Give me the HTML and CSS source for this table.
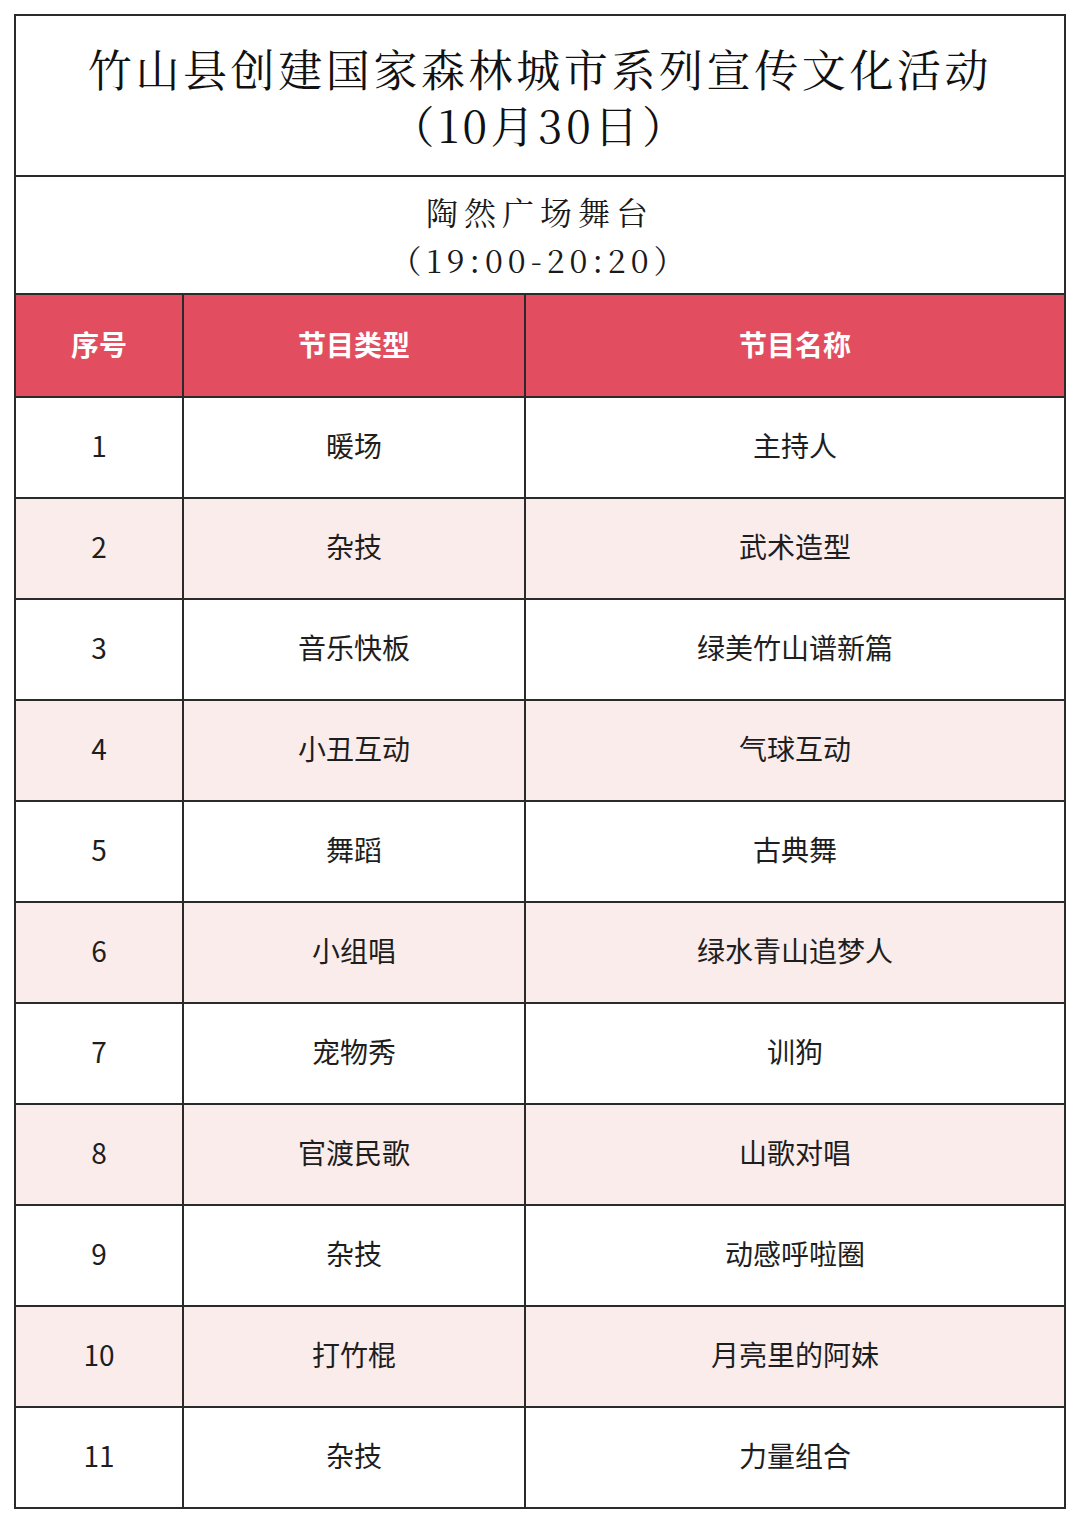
FILE: index.html
```html
<!DOCTYPE html>
<html lang="zh-CN">
<head>
<meta charset="utf-8">
<title>竹山县创建国家森林城市系列宣传文化活动</title>
<link rel="stylesheet" href="styles.css">
</head>
<body>
<table class="schedule">
  <colgroup>
    <col class="c-no">
    <col class="c-type">
    <col class="c-name">
  </colgroup>
  <tr class="r-title">
    <td colspan="3" class="title"><span class="line">竹山县创建国家森林城市系列宣传文化活动</span><span class="line">（10月30日）</span></td>
  </tr>
  <tr class="r-sub">
    <td colspan="3" class="sub"><span class="line">陶然广场舞台</span><span class="line time">（19:00-20:20）</span></td>
  </tr>
  <tr class="r-head">
    <th>序号</th><th>节目类型</th><th>节目名称</th>
  </tr>
  <tr class="row"><td>1</td><td>暖场</td><td>主持人</td></tr>
  <tr class="row alt"><td>2</td><td>杂技</td><td>武术造型</td></tr>
  <tr class="row"><td>3</td><td>音乐快板</td><td>绿美竹山谱新篇</td></tr>
  <tr class="row alt"><td>4</td><td>小丑互动</td><td>气球互动</td></tr>
  <tr class="row"><td>5</td><td>舞蹈</td><td>古典舞</td></tr>
  <tr class="row alt"><td>6</td><td>小组唱</td><td>绿水青山追梦人</td></tr>
  <tr class="row"><td>7</td><td>宠物秀</td><td>训狗</td></tr>
  <tr class="row alt"><td>8</td><td>官渡民歌</td><td>山歌对唱</td></tr>
  <tr class="row"><td>9</td><td>杂技</td><td>动感呼啦圈</td></tr>
  <tr class="row alt"><td>10</td><td>打竹棍</td><td>月亮里的阿妹</td></tr>
  <tr class="row"><td>11</td><td>杂技</td><td>力量组合</td></tr>
</table>
</body>
</html>
```
FILE: styles.css
```css
html, body {
  margin: 0;
  padding: 0;
  background: #ffffff;
}
body {
  padding: 14px 15px 0 14px;
  font-family: "Noto Sans CJK SC", "Noto Sans", sans-serif;
  color: #1e1e1e;
}
.schedule {
  width: 1050px;
  border-collapse: collapse;
  table-layout: fixed;
  border: 2px solid #2a2a2a;
}
.c-no { width: 168px; }
.c-type { width: 342px; }
.c-name { width: 540px; }
.schedule td, .schedule th {
  border: 2px solid #2a2a2a;
  text-align: center;
  vertical-align: middle;
  padding: 0;
}
.line {
  display: block;
}
.title {
  font-family: "Noto Serif CJK SC", "Source Han Serif SC", "AR PL UMing CN", "Noto Sans CJK SC", serif;
  font-size: 44px;
  line-height: 56px;
  letter-spacing: 3.6px;
  color: #111;
  padding-top: 2px;
}
.sub {
  font-family: "Noto Serif CJK SC", "Source Han Serif SC", "AR PL UMing CN", "Noto Sans CJK SC", serif;
  font-size: 32px;
  line-height: 48px;
  letter-spacing: 6px;
  color: #1a1a1a;
}
.sub .time {
  letter-spacing: 5px;
}
.r-title { height: 161px; }
.r-sub { height: 118px; }
.r-head { height: 103px; }
.r-head th {
  background: #e24e60;
  color: #ffffff;
  font-size: 28px;
  font-weight: 700;
  padding-bottom: 4px;
}
.row { height: 101px; }
.row td {
  font-size: 28px;
  color: #1e1e1e;
  padding-bottom: 6px;
}
.row.alt td {
  background: #fbecec;
}
```
